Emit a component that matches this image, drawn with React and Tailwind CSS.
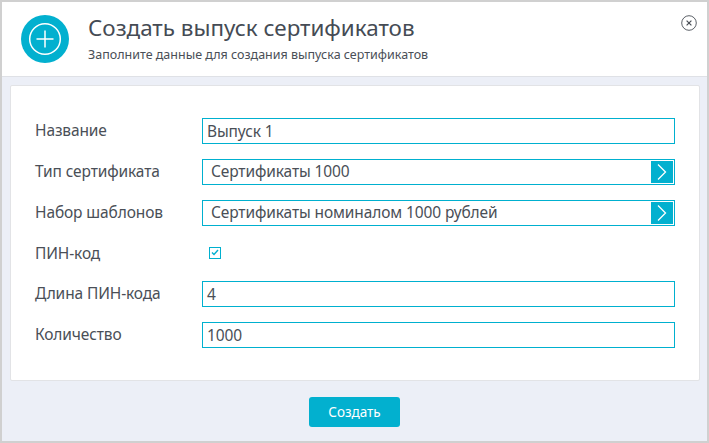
import React from "react";

function Label({ children }) {
  return <div className="w-[167px] shrink-0 text-[15.5px] tracking-[-0.12px] text-[#4a4f57]">{children}</div>;
}

function Row({ label, children, short }) {
  return (
    <div className={short ? "flex h-[25px] items-center" : "flex h-[26px] items-center"}>
      <Label>{label}</Label>
      {children}
    </div>
  );
}

function TextBox({ value }) {
  return (
    <div className="flex h-[26px] w-[473px] items-center border border-[#00b0cf] pl-[4px] pt-[1px] text-[15.5px] tracking-[-0.12px] text-[#4a4f57]">
      {value}
    </div>
  );
}

function SelectBox({ value }) {
  return (
    <div className="flex h-[26px] w-[473px] items-center justify-between border border-[#00b0cf] p-[1px] pl-[8px] text-[15.5px] tracking-[-0.12px] text-[#4a4f57]">
      <span>{value}</span>
      <span className="flex h-[22px] w-[22px] items-center justify-center bg-[#02b0cf]">
        <svg width="12" height="18" viewBox="0 0 12 18" fill="none" stroke="#fff" strokeWidth="1.3">
          <path d="M2 1.5 L9.5 9 L2 16.5" />
        </svg>
      </span>
    </div>
  );
}

export default function App() {
  return (
    <div className="flex h-[443px] w-[709px] flex-col overflow-hidden border-2 border-[#d0d0d0] bg-[#eceff7] font-['Noto_Sans','Open_Sans',sans-serif]">
      <header className="relative flex h-[75px] shrink-0 items-center border-b border-[#dfe1e6] bg-white pl-[19px]">
        <div className="flex h-[48px] w-[48px] items-center justify-center rounded-full bg-[#02b0cf]">
          <svg width="34" height="34" viewBox="0 0 34 34" fill="none" stroke="#fff">
            <circle cx="17" cy="17" r="15.3" strokeWidth="1.5" />
            <path d="M17 8.5V25.5M8.5 17H25.5" strokeWidth="1.5" />
          </svg>
        </div>
        <div className="ml-[19px] flex -translate-y-[1px] flex-col">
          <h1 className="text-[22.4px] leading-[28px] font-normal text-[#454b54]">Создать выпуск сертификатов</h1>
          <p className="mt-[5px] text-[12.5px] leading-[16px] text-[#4a4f57]">Заполните данные для создания выпуска сертификатов</p>
        </div>
        <button className="absolute right-[10px] top-[13px]">
          <svg width="16" height="16" viewBox="0 0 16 16" fill="none" stroke="#4a4f57" className="block">
            <circle cx="8" cy="8" r="7.3" strokeWidth="0.9" />
            <path d="M5.6 5.6L10.4 10.4M10.4 5.6L5.6 10.4" strokeWidth="1.2" />
          </svg>
        </button>
      </header>

      <main className="flex flex-1 flex-col pl-[8px] pr-[7px] pt-[8px]">
        <section className="flex h-[296px] flex-col gap-[15px] rounded-[2px] border border-[#e2e3e6] bg-white pl-[24px] pt-[32px]">
          <Row label="Название"><TextBox value="Выпуск 1" /></Row>
          <Row label="Тип сертификата"><SelectBox value="Сертификаты 1000" /></Row>
          <Row label="Набор шаблонов"><SelectBox value="Сертификаты номиналом 1000 рублей" /></Row>
          <Row label="ПИН-код" short>
            <span className="ml-[7px] flex h-[12px] w-[12px] -translate-y-[1px] items-center justify-center border border-[#00b0cf]">
              <svg width="8" height="7" viewBox="0 0 8 7" fill="none" stroke="#00b0cf" strokeWidth="1.4">
                <path d="M1 3.5L3 5.5L7 1" />
              </svg>
            </span>
          </Row>
          <Row label="Длина ПИН-кода"><TextBox value="4" /></Row>
          <Row label="Количество"><TextBox value="1000" /></Row>
        </section>
        <div className="flex justify-center pr-[1px] pt-[16px]">
          <button className="h-[30px] w-[91px] rounded-[3px] bg-[#02b0cf] text-[13.5px] text-white">Создать</button>
        </div>
      </main>
    </div>
  );
}
